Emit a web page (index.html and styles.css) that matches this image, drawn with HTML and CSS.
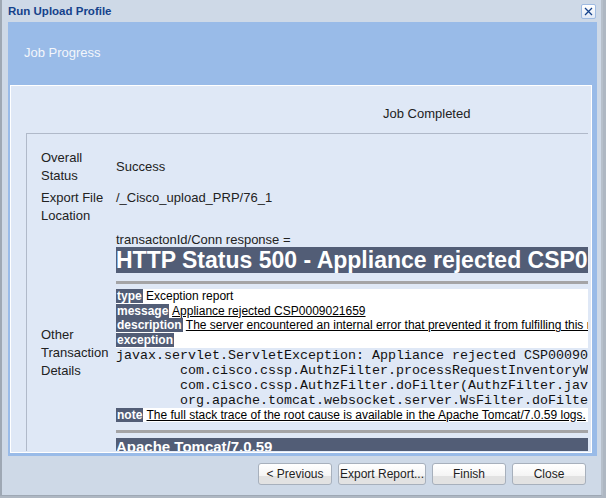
FILE: index.html
```html
<!DOCTYPE html>
<html>
<head>
<meta charset="utf-8">
<title>Run Upload Profile</title>
<link rel="stylesheet" href="styles.css">
</head>
<body>
<div class="window">
  <div class="titlebar">
    <span class="title">Run Upload Profile</span>
    <span class="close"><svg width="11" height="11" viewBox="0 0 11 11"><path d="M2 2L9 9M9 2L2 9" stroke="#15428b" stroke-width="1.3" fill="none"/></svg></span>
  </div>
  <div class="frame">
    <div class="frame-head">Job Progress</div>
    <div class="panel">
      <div class="scroll">
        <div class="job-status">Job Completed</div>
        <div class="details">
          <div class="label mid">Overall Status</div>
          <div class="value mid">Success</div>
          <div class="label">Export File Location</div>
          <div class="value">/_Cisco_upload_PRP/76_1</div>
          <div class="label mid">Other Transaction Details</div>
          <div class="value response">
            <div class="resp-title">transactonId/Conn response =</div>
            <h1 class="err-h1">HTTP Status 500 - Appliance rejected CSP0009021659</h1>
            <hr class="err-hr">
            <p class="err-p"><b class="err-b">type</b> Exception report</p>
            <p class="err-p"><b class="err-b">message</b> <u>Appliance rejected CSP0009021659</u></p>
            <p class="err-p"><b class="err-b">description</b> <u>The server encountered an internal error that prevented it from fulfilling this request.</u></p>
            <p class="err-p"><b class="err-b">exception</b></p>
<pre class="trace">javax.servlet.ServletException: Appliance rejected CSP0009021659
&#9;com.cisco.cssp.AuthzFilter.processRequestInventoryWrapper(AuthzFilter.java)
&#9;com.cisco.cssp.AuthzFilter.doFilter(AuthzFilter.java)
&#9;org.apache.tomcat.websocket.server.WsFilter.doFilter(WsFilter.java:52)</pre>
            <p class="err-p"><b class="err-b">note</b> <u>The full stack trace of the root cause is available in the Apache Tomcat/7.0.59 logs.</u></p>
            <hr class="err-hr">
            <h3 class="err-h3">Apache Tomcat/7.0.59</h3>
          </div>
        </div>
      </div>
    </div>
  </div>
  <div class="buttons">
    <button class="btn btn-prev">&lt; Previous</button>
    <button class="btn btn-export">Export Report...</button>
    <button class="btn">Finish</button>
    <button class="btn">Close</button>
  </div>
</div>
</body>
</html>
```

FILE: styles.css
```css
html, body {
  margin: 0;
  padding: 0;
}
body {
  background: #aeb7c2;
  font-family: "Liberation Sans", Arial, sans-serif;
  width: 606px;
  height: 498px;
  overflow: hidden;
}
.window {
  box-sizing: border-box;
  width: 603px;
  height: 496px;
  background: #ced9e7;
  border-left: 2px solid #9ea8b4;
  border-right: 2px solid #b7c0cb;
  border-bottom: 1px solid #9ea8b4;
  display: flex;
  flex-direction: column;
}
.titlebar {
  height: 22px;
  flex: none;
  display: flex;
  align-items: center;
  justify-content: space-between;
  padding: 0 5px 0 6px;
}
.title {
  font-weight: bold;
  font-size: 11.5px;
  color: #15428b;
}
.close {
  width: 15px;
  height: 15px;
  box-sizing: border-box;
  border: 1px solid #9fbbe2;
  border-radius: 2px;
  background: linear-gradient(#ffffff, #e1e9f6);
  display: flex;
  align-items: center;
  justify-content: center;
}
.close svg {
  display: block;
}
.frame {
  flex: none;
  margin: 0 4px 0 6px;
  height: 434px;
  background: #99bbe8;
  display: flex;
  flex-direction: column;
}
.frame-head {
  height: 63px;
  box-sizing: border-box;
  padding: 23px 0 0 16px;
  color: #f3f6fb;
  font-size: 13px;
  line-height: 16px;
  flex: none;
}
.panel {
  box-sizing: border-box;
  height: 368px;
  margin: 0 5px 0 2px;
  border: 1px solid #ffffff;
  background: #dfe8f6;
  padding: 0 3px 1px 15px;
  flex: none;
}
.scroll {
  height: 365px;
  overflow: hidden;
}
.job-status {
  height: 47px;
  box-sizing: border-box;
  padding: 20px 0 0 357px;
  font-size: 13px;
  line-height: 16px;
  color: #222;
}
.details {
  border-top: 1px solid #b0b9c9;
  border-left: 1px solid #b0b9c9;
  padding: 15px 0 0 14px;
  display: grid;
  grid-template-columns: 75px 700px;
  row-gap: 4px;
  font-size: 13px;
  line-height: 18px;
  color: #222;
}
.label.mid,
.value.mid {
  align-self: center;
}
.response {
  padding: 4px 0 21px;
  white-space: nowrap;
}
.resp-title {
  line-height: 14px;
}
.err-h1 {
  margin: 0;
  font-family: "Liberation Sans", Arial, sans-serif;
  font-weight: bold;
  font-size: 23px;
  line-height: 26px;
  color: #ffffff;
  background: #525d76;
}
.err-hr {
  margin: 8px 0 5px;
  height: 3px;
  border: 0;
  background: #a4a4a6;
}
.err-p {
  margin: 0;
  background: #ffffff;
  color: #000;
  font-size: 12px;
  line-height: 14.67px;
}
.err-b {
  color: #ffffff;
  background: #525d76;
  font-weight: bold;
  padding: 0 1px;
}
.trace {
  margin: 0;
  font-family: "Liberation Mono", "Courier New", monospace;
  font-size: 13.33px;
  line-height: 15px;
  tab-size: 8;
  color: #111;
}
.err-h3 {
  margin: 0;
  font-size: 15px;
  line-height: 17px;
  font-weight: bold;
  color: #ffffff;
  background: #525d76;
}
.buttons {
  display: flex;
  justify-content: flex-end;
  gap: 6px;
  padding: 7px 15px 0 0;
}
.btn {
  width: 74px;
  height: 22px;
  box-sizing: border-box;
  border: 1px solid #a7b0bc;
  border-radius: 3px;
  background: linear-gradient(to bottom, #ffffff 0%, #f5f5f5 58%, #e2e2e2 60%, #e2e2e2 100%);
  font-family: "Liberation Sans", Arial, sans-serif;
  font-size: 12px;
  color: #1e1e1e;
  padding: 0;
}
.btn-export {
  width: 88px;
}
```
